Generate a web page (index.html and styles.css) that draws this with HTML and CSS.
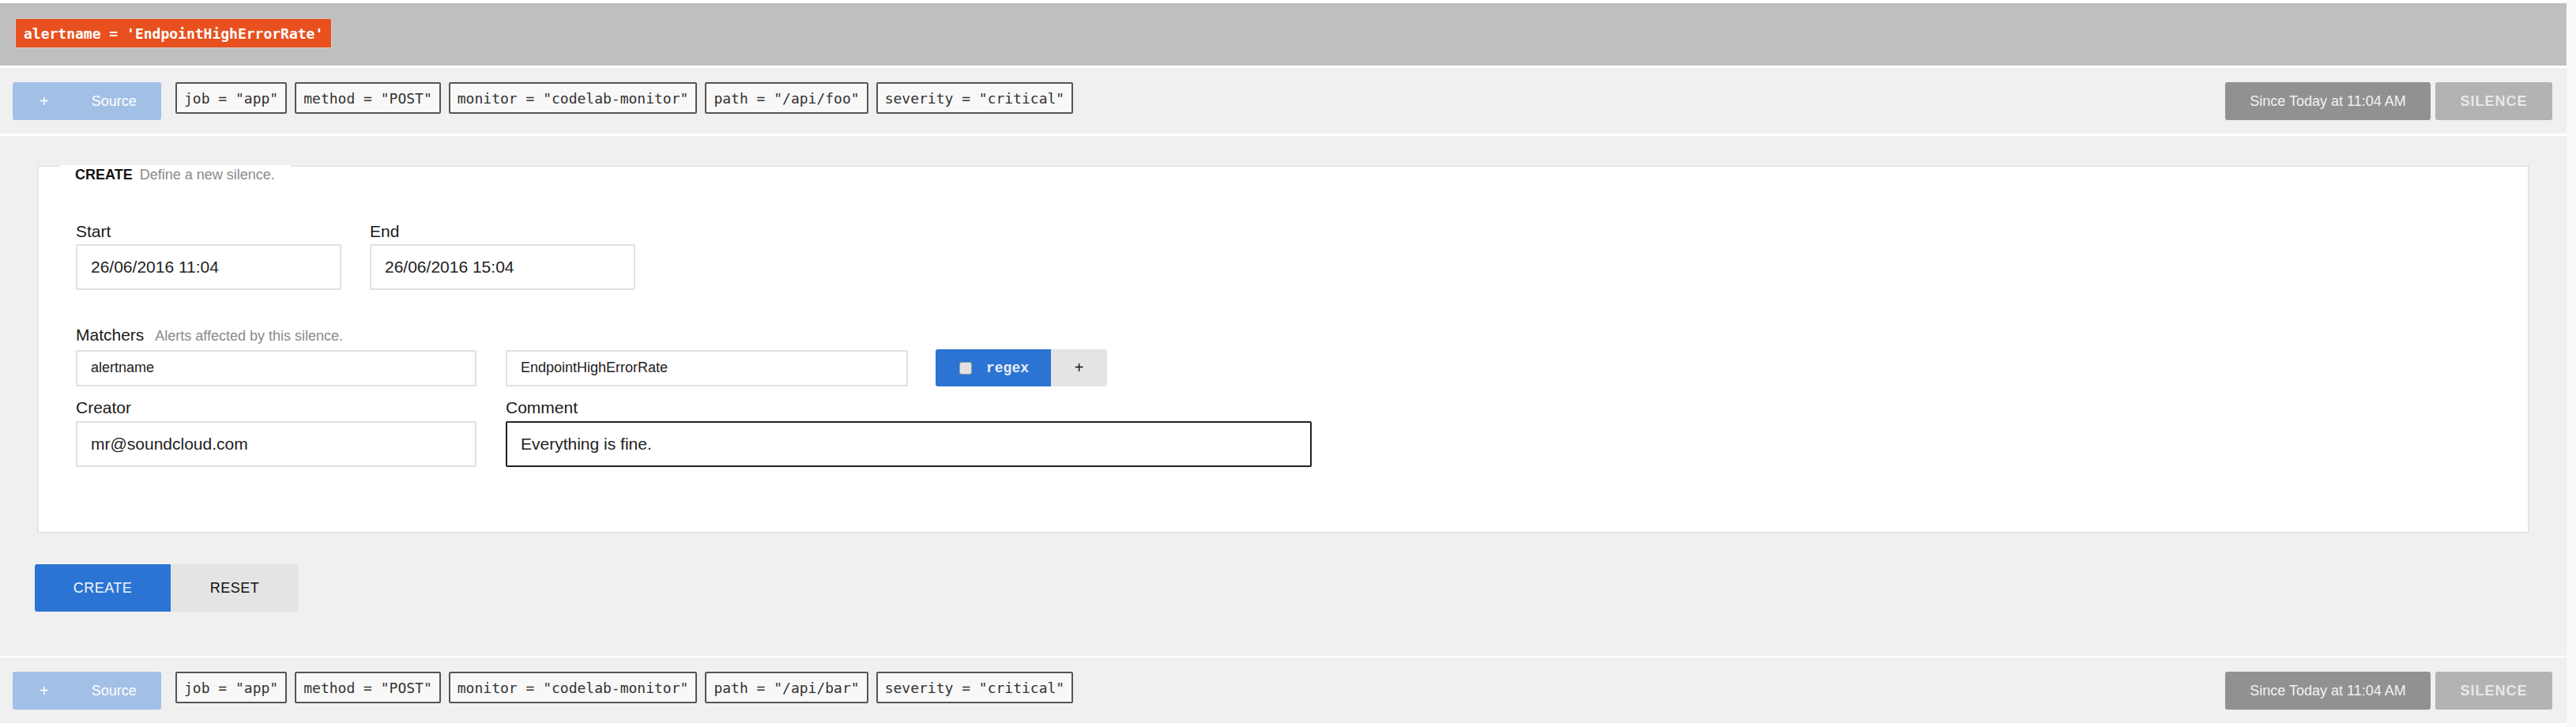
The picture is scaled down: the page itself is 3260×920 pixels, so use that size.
FILE: index.html
```html
<!DOCTYPE html>
<html lang="en">
<head>
<meta charset="utf-8">
<title>Silences</title>
<link rel="stylesheet" href="styles.css">
</head>
<body>
<div class="page">
  <header class="topbar">
    <span class="alert-label">alertname = 'EndpointHighErrorRate'</span>
  </header>

  <div class="alert-row">
    <button class="source-btn"><span class="plus">+</span><span>Source</span></button>
    <ul class="chips">
      <li class="chip">job = "app"</li>
      <li class="chip">method = "POST"</li>
      <li class="chip">monitor = "codelab-monitor"</li>
      <li class="chip">path = "/api/foo"</li>
      <li class="chip">severity = "critical"</li>
    </ul>
    <div class="row-actions">
      <button class="since-btn">Since Today at 11:04 AM</button>
      <button class="silence-btn">SILENCE</button>
    </div>
  </div>

  <main class="silence-form">
    <section class="card">
      <div class="legend"><strong class="legend-title">CREATE</strong><span class="muted">Define a new silence.</span></div>

      <div class="time-row">
        <label class="field">
          <span class="field-label">Start</span>
          <input class="input input-time" value="26/06/2016 11:04">
        </label>
        <label class="field">
          <span class="field-label">End</span>
          <input class="input input-time" value="26/06/2016 15:04">
        </label>
      </div>

      <div class="matchers">
        <div class="field-label">Matchers <span class="muted muted-lg">Alerts affected by this silence.</span></div>
        <div class="matcher-row">
          <input class="input input-matcher" value="alertname">
          <input class="input input-matcher" value="EndpointHighErrorRate">
          <div class="btn-group">
            <button class="regex-btn"><span class="checkbox"></span><span>regex</span></button>
            <button class="add-btn">+</button>
          </div>
        </div>
      </div>

      <div class="meta-row">
        <label class="field">
          <span class="field-label">Creator</span>
          <input class="input input-creator" value="mr@soundcloud.com">
        </label>
        <label class="field">
          <span class="field-label">Comment</span>
          <input class="input input-comment" value="Everything is fine.">
        </label>
      </div>
    </section>

    <div class="form-actions">
      <button class="btn-create">CREATE</button>
      <button class="btn-reset">RESET</button>
    </div>
  </main>

  <div class="alert-row">
    <button class="source-btn"><span class="plus">+</span><span>Source</span></button>
    <ul class="chips">
      <li class="chip">job = "app"</li>
      <li class="chip">method = "POST"</li>
      <li class="chip">monitor = "codelab-monitor"</li>
      <li class="chip">path = "/api/bar"</li>
      <li class="chip">severity = "critical"</li>
    </ul>
    <div class="row-actions">
      <button class="since-btn">Since Today at 11:04 AM</button>
      <button class="silence-btn">SILENCE</button>
    </div>
  </div>
</div>
</body>
</html>
```

FILE: styles.css
```css
* { box-sizing: border-box; }

html, body {
  margin: 0;
  padding: 0;
  background: #f9f9f9;
  font-family: "Liberation Sans", Arial, sans-serif;
  color: #222;
}

button {
  font-family: "Liberation Sans", Arial, sans-serif;
  border: none;
  margin: 0;
  cursor: pointer;
}

.page {
  width: 3248px;
  height: 920px;
  background: #ffffff;
  padding-top: 4px;
  display: flex;
  flex-direction: column;
  gap: 3px;
  overflow: hidden;
}

/* Top grey bar */
.topbar {
  height: 79px;
  background: #bfbfbf;
  padding: 19px 19px 0;
  display: flex;
  align-items: flex-start;
  flex-shrink: 0;
}

.alert-label {
  display: inline-flex;
  align-items: center;
  height: 38px;
  padding: 0 10px;
  background: #e8511f;
  border: 1px solid #d6cbc6;
  border-radius: 2px;
  color: #fff;
  font-family: "DejaVu Sans Mono", monospace;
  font-weight: bold;
  font-size: 18px;
}

/* Alert rows */
.alert-row {
  height: 83px;
  flex-shrink: 0;
  background: #f0f0f0;
  padding: 18px 18px 0 16px;
  display: flex;
  align-items: flex-start;
}

.source-btn {
  width: 188px;
  height: 48px;
  background: #a2bfe6;
  border-radius: 3px;
  color: #fff;
  font-size: 18px;
  display: flex;
  align-items: center;
  padding: 0 0 0 34px;
  gap: 54px;
}

.plus { font-size: 20px; }

.chips {
  list-style: none;
  margin: 0 0 0 18px;
  padding: 0;
  display: flex;
  gap: 10px;
}

.chip {
  height: 40px;
  display: flex;
  align-items: center;
  padding: 0 9px;
  border: 2px solid #555;
  border-radius: 2px;
  background: #f8f8f8;
  font-family: "DejaVu Sans Mono", monospace;
  font-size: 18px;
  color: #333;
  white-space: pre;
}

.row-actions {
  margin-left: auto;
  display: flex;
  gap: 6px;
}

.since-btn {
  width: 260px;
  height: 48px;
  background: #919191;
  border-radius: 3px;
  color: #f2f2f2;
  font-size: 18px;
}

.silence-btn {
  width: 148px;
  height: 48px;
  background: #b3b3b3;
  border-radius: 3px;
  color: #e8e8e8;
  font-size: 18px;
  font-weight: bold;
  letter-spacing: 1px;
}

/* Main form */
.silence-form {
  height: 658px;
  flex-shrink: 0;
  margin-bottom: -1px;
  background: #f0f0f0;
  padding: 37px 47px 0;
}

.card {
  background: #fff;
  border: 2px solid #e5e5e5;
  padding: 0 47px 82px;
  display: flex;
  flex-direction: column;
}

.legend {
  align-self: flex-start;
  margin: -2px 0 0 -21px;
  padding: 0 20px;
  height: 24px;
  background: #fff;
  display: flex;
  align-items: center;
  gap: 9px;
  font-size: 18px;
}

.legend-title {
  font-size: 18px;
  color: #111;
}

.muted {
  color: #8a8a8a;
  font-size: 18px;
  font-weight: normal;
}

.muted-lg { margin-left: 8px; }

.field {
  display: flex;
  flex-direction: column;
}

.field-label {
  font-size: 21px;
  line-height: 24px;
  color: #1a1a1a;
}

.input {
  font-family: "Liberation Sans", Arial, sans-serif;
  border: 2px solid #e0e0e0;
  border-radius: 2px;
  background: #fff;
  color: #222;
  outline: none;
  margin: 0;
  padding: 0 0 0 17px;
}

.time-row {
  margin-top: 48px;
  display: flex;
  gap: 36px;
}

.time-row .field-label { margin-bottom: 4px; }

.input-time {
  width: 336px;
  height: 58px;
  font-size: 21px;
}

.matchers { margin-top: 45px; }

.matchers > .field-label { margin-bottom: 5px; }

.matcher-row {
  display: flex;
  align-items: center;
}

.input-matcher {
  width: 507px;
  height: 46px;
  font-size: 18px;
}

.input-matcher + .input-matcher {
  margin-left: 37px;
  width: 509px;
}

.btn-group {
  margin-left: 35px;
  display: flex;
}

.regex-btn {
  width: 146px;
  height: 47px;
  background: #2b74d3;
  border-radius: 3px 0 0 3px;
  color: #e9eef7;
  font-family: "Liberation Mono", "Courier New", monospace;
  font-weight: bold;
  font-size: 18px;
  display: flex;
  align-items: center;
  padding: 0 0 0 30px;
  gap: 18px;
}

.checkbox {
  width: 16px;
  height: 16px;
  border-radius: 3px;
  background: #e2e2e2;
  border: 1px solid #9a9a9a;
}

.add-btn {
  width: 71px;
  height: 47px;
  background: #e4e4e4;
  border-radius: 0 3px 3px 0;
  font-size: 20px;
  color: #111;
}

.meta-row {
  margin-top: 15px;
  display: flex;
  gap: 37px;
}

.meta-row .field-label { margin-bottom: 5px; }

.input-creator {
  width: 507px;
  height: 58px;
  font-size: 21px;
}

.input-comment {
  width: 1020px;
  height: 58px;
  font-size: 21px;
  border-color: #222;
}

.form-actions {
  margin: 39px 0 0 -3px;
  display: flex;
}

.btn-create {
  width: 172px;
  height: 60px;
  background: #2b74d3;
  color: #f2f6fc;
  font-size: 18px;
  letter-spacing: 0.5px;
  border-radius: 3px 0 0 3px;
}

.btn-reset {
  width: 162px;
  height: 60px;
  background: #e4e4e4;
  color: #111;
  font-size: 18px;
  letter-spacing: 0.5px;
  border-radius: 0 3px 3px 0;
}
```
